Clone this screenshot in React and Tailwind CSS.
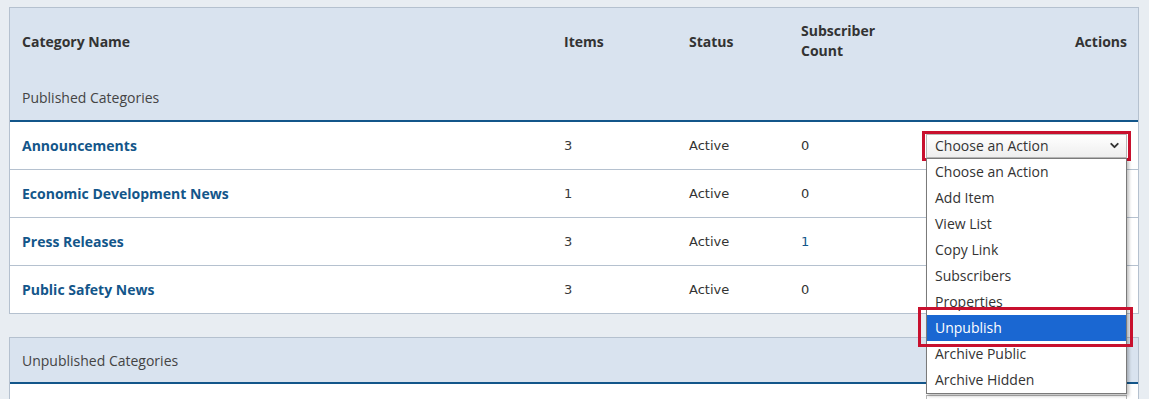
import React from 'react';
import { ChevronDown } from 'lucide-react';

const rows = [
  { name: 'Announcements', items: '3', status: 'Active', subs: '0', first: true },
  { name: 'Economic Development News', items: '1', status: 'Active', subs: '0' },
  { name: 'Press Releases', items: '3', status: 'Active', subs: '1' },
  { name: 'Public Safety News', items: '3', status: 'Active', subs: '0', last: true },
];

const options = [
  'Choose an Action',
  'Add Item',
  'View List',
  'Copy Link',
  'Subscribers',
  'Properties',
  'Unpublish',
  'Archive Public',
  'Archive Hidden',
];

const cols = 'grid grid-cols-[542px_125px_112px_1fr_auto] pl-[12px] pr-[11px] items-center';

function ActionSelect() {
  return (
    <div className="relative">
      {/* red highlight round the select */}
      <div className="border-[3px] border-[#c8102e] bg-white px-px">
        <div className="w-[201px] h-[24px] border border-[#b8b8b8] bg-gradient-to-b from-white to-[#eeeeee] flex items-center justify-between pl-[8px] pr-[5px] text-[14px] text-[#333]">
          <span>Choose an Action</span>
          <ChevronDown className="w-[13px] h-[13px] text-[#333]" strokeWidth={3.5} />
        </div>
      </div>

      {/* open list */}
      <div className="absolute left-[4px] top-[27px] w-[201px] z-20 bg-white border border-[#7a7a7a] shadow-[2px_2px_3px_rgba(0,0,0,0.25)]">
        {options.map((o) => (
          <div
            key={o}
            className={
              o === 'Unpublish'
                ? 'h-[26px] flex items-center pl-[8px] text-[14px] bg-[#1a67d2] text-white'
                : 'h-[26px] flex items-center pl-[8px] text-[14px] text-[#333]'
            }
          >
            {o}
          </div>
        ))}
      </div>

      {/* red highlight round Unpublish */}
      <div className="absolute z-30 left-[-4px] top-[176px] w-[215px] h-[40px] border-[3px] border-[#c8102e] pointer-events-none" />
    </div>
  );
}

export default function App() {
  const num = { fontFamily: '"DejaVu Sans", sans-serif' };
  return (
    <div
      className="h-screen overflow-hidden bg-[#e8edf2] pl-[9px] pr-[10px] pt-[7px]"
      style={{ fontFamily: '"Open Sans", Arial, sans-serif' }}
    >
      {/* published panel */}
      <div className="border border-[#b5c1cf] bg-white">
        <div className="bg-[#d9e3ef] border-b-2 border-[#13568a]">
          <div className={cols + ' h-[66px] text-[14px] font-bold text-[#333]'}>
            <div>Category Name</div>
            <div>Items</div>
            <div>Status</div>
            <div className="leading-[20px]">
              Subscriber
              <br />
              Count
            </div>
            <div className="text-right">Actions</div>
          </div>
          <div className="h-[46px] flex items-center pl-[12px] text-[14px] text-[#444]">Published Categories</div>
        </div>

        {rows.map((r) => (
          <div
            key={r.name}
            className={
              cols + ' ' +
              (r.last ? 'h-[47px]' : 'h-[48px] border-b border-[#b5c1cf]')
            }
          >
            <div className="text-[14px] font-bold text-[#13568a]">{r.name}</div>
            <div className="text-[13px] text-[#3a3a3a]" style={num}>
              {r.items}
            </div>
            <div className="text-[13px] text-[#333]" style={num}>
              {r.status}
            </div>
            <div className={r.subs === '1' ? 'text-[13px] text-[#13568a]' : 'text-[13px] text-[#333]'} style={num}>
              {r.subs}
            </div>
            <div className="flex justify-end">
              {r.first && (
                <div className="mr-[-4px]">
                  <ActionSelect />
                </div>
              )}
            </div>
          </div>
        ))}
      </div>

      {/* unpublished panel */}
      <div className="mt-[23px] border border-[#b5c1cf] bg-white">
        <div className="bg-[#d9e3ef] border-b-2 border-[#13568a] h-[46px] flex items-center pl-[12px] text-[14px] text-[#444]">
          Unpublished Categories
        </div>
        <div className="h-[40px] flex justify-end pr-[11px] pt-[11px]">
          <div className="w-[201px] h-[24px] border border-[#b8b8b8] bg-white" />
        </div>
      </div>
    </div>
  );
}
